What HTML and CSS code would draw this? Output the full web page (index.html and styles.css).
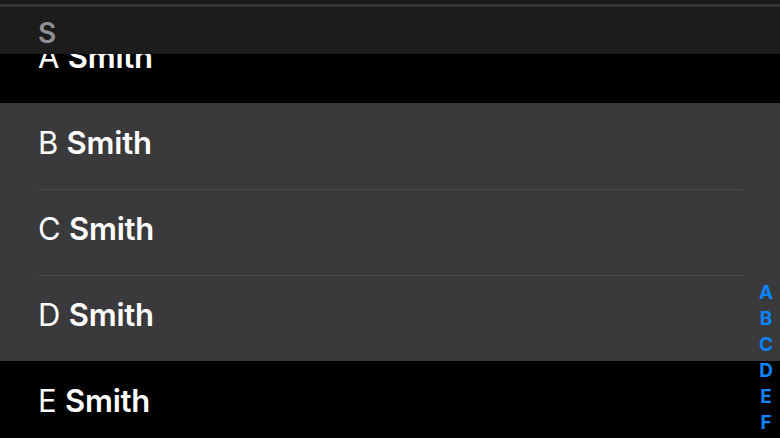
FILE: index.html
```html
<!DOCTYPE html>
<html lang="en">
<head>
    <meta charset="UTF-8">
    <title>Contacts</title>
    <link rel="stylesheet" href="styles.css">
</head>
<body>
    <div class="screen">
        <div class="section-header">
            <span class="section-letter">S</span>
        </div>

        <ul class="contact-list">
            <li class="contact">A <b>Smith</b></li>
            <li class="contact selected">B <b>Smith</b></li>
            <li class="contact selected">C <b>Smith</b></li>
            <li class="contact selected">D <b>Smith</b></li>
            <li class="contact">E <b>Smith</b></li>
        </ul>

        <div class="index-bar">
            <span>A</span>
            <span>B</span>
            <span>C</span>
            <span>D</span>
            <span>E</span>
            <span>F</span>
        </div>
    </div>
</body>
</html>
```

FILE: styles.css
```css
* {
    box-sizing: border-box;
    margin: 0;
    padding: 0;
}

body {
    background-color: #000;
    font-family: Inter, Roboto, "Noto Sans", sans-serif;
    color: #fff;
}

.screen {
    position: relative;
    width: 780px;
    height: 438px;
    overflow: hidden;
    background-color: #000;
}

/* sticky section header, lies over the first row */
.section-header {
    position: absolute;
    top: 0;
    left: 0;
    right: 0;
    height: 54px;
    background-color: #1c1c1c;
    border-top: 4px solid #1a1a1a;
    box-shadow: inset 0 3px 0 #333335;
    padding: 12px 0 0 38px;
    z-index: 2;
}

.section-letter {
    font-size: 28px;
    font-weight: 600;
    color: #8e8e93;
}

.contact-list {
    list-style: none;
    padding-top: 17px;
}

.contact {
    height: 86px;
    line-height: 80px;
    padding-left: 38px;
    font-size: 31px;
    font-weight: 400;
    letter-spacing: -0.2px;
    position: relative;
}

.contact b {
    font-weight: 600;
}

.contact.selected {
    background-color: #3a3a3c;
}

.contact.selected + .contact.selected::before {
    content: "";
    position: absolute;
    top: 0;
    left: 38px;
    right: 37px;
    height: 1px;
    background-color: #4b4b4d;
}

.index-bar {
    position: absolute;
    right: 0;
    top: 280px;
    width: 28px;
    display: flex;
    flex-direction: column;
    align-items: center;
    z-index: 3;
}

.index-bar span {
    height: 26px;
    line-height: 26px;
    font-size: 19px;
    font-weight: 700;
    color: #0a84ff;
}
```
